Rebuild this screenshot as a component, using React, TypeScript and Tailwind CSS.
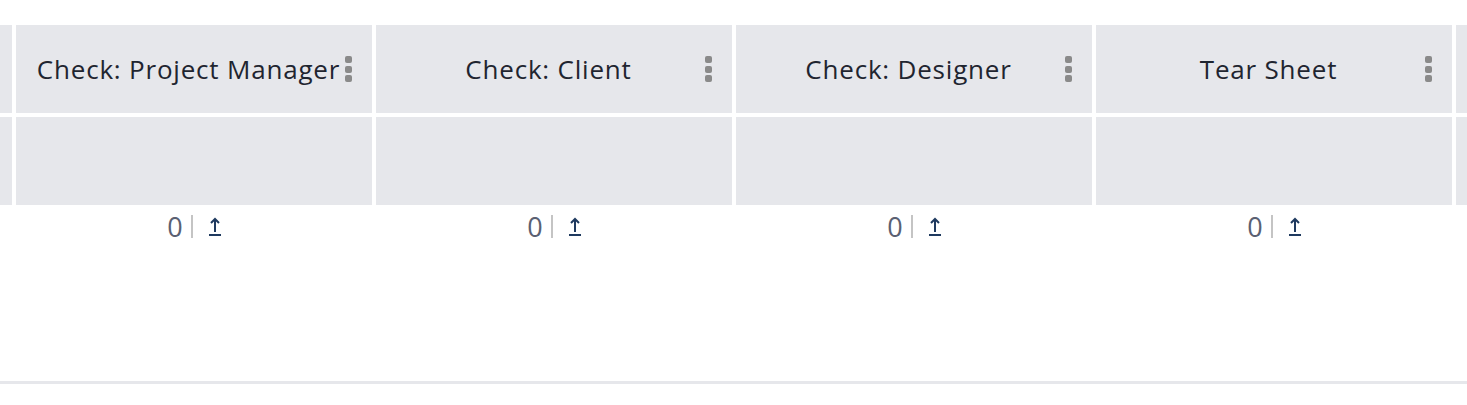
import React from 'react'

const columns = ['Check: Project Manager', 'Check: Client', 'Check: Designer', 'Tear Sheet']

function Kebab() {
    return (
        <div className="flex flex-col gap-[2.5px] shrink-0">
            <span className="block w-[7px] h-[7px] rounded-[2px] bg-[#8a8a8a]" />
            <span className="block w-[7px] h-[7px] rounded-[2px] bg-[#8a8a8a]" />
            <span className="block w-[7px] h-[7px] rounded-[2px] bg-[#8a8a8a]" />
        </div>
    )
}

function UploadArrow() {
    return (
        <svg width="12" height="21" viewBox="0 0 12 21" fill="none">
            <path d="M6 16V3" stroke="#1f3a5f" strokeWidth="2" />
            <path d="M2 7L6 3L10 7" stroke="#1f3a5f" strokeWidth="2" />
            <rect x="0" y="18" width="12" height="2" fill="#1f3a5f" />
        </svg>
    )
}

function Column({ title }: { title: string }) {
    return (
        <div className="w-[356px] shrink-0 flex flex-col gap-1">
            <div className="h-[88px] bg-[#e6e7eb] flex items-center pl-5 pr-5 gap-1">
                <div className="flex-1 text-center whitespace-nowrap text-[26px] tracking-[0.8px] leading-none text-[#1f2530]">{title}</div>
                <Kebab />
            </div>
            <div className="h-[88px] bg-[#e6e7eb]" />
            <div className="h-[34px] flex items-center justify-center">
                <span className="text-[27px] leading-none text-[#5a6072]">0</span>
                <span className="block w-[2px] h-[23px] bg-[#c4c4c4] ml-[8px] mr-[16px]" />
                <UploadArrow />
            </div>
        </div>
    )
}

export default function App() {
    return (
        <div className="w-[1467px] h-[405px] bg-white overflow-hidden flex flex-col" style={{ fontFamily: '"Open Sans", sans-serif' }}>
            <div className="flex gap-1 pt-[25px]">
                <div className="w-[12px] shrink-0 flex flex-col gap-1">
                    <div className="h-[88px] bg-[#e6e7eb]" />
                    <div className="h-[88px] bg-[#e6e7eb]" />
                </div>
                {columns.map((c) => (
                    <Column key={c} title={c} />
                ))}
                <div className="w-[11px] shrink-0 flex flex-col gap-1">
                    <div className="h-[88px] bg-[#e6e7eb]" />
                    <div className="h-[88px] bg-[#e6e7eb]" />
                </div>
            </div>
            <div className="mt-auto mb-[21px] h-[3px] bg-[#e6e7eb]" />
        </div>
    )
}
